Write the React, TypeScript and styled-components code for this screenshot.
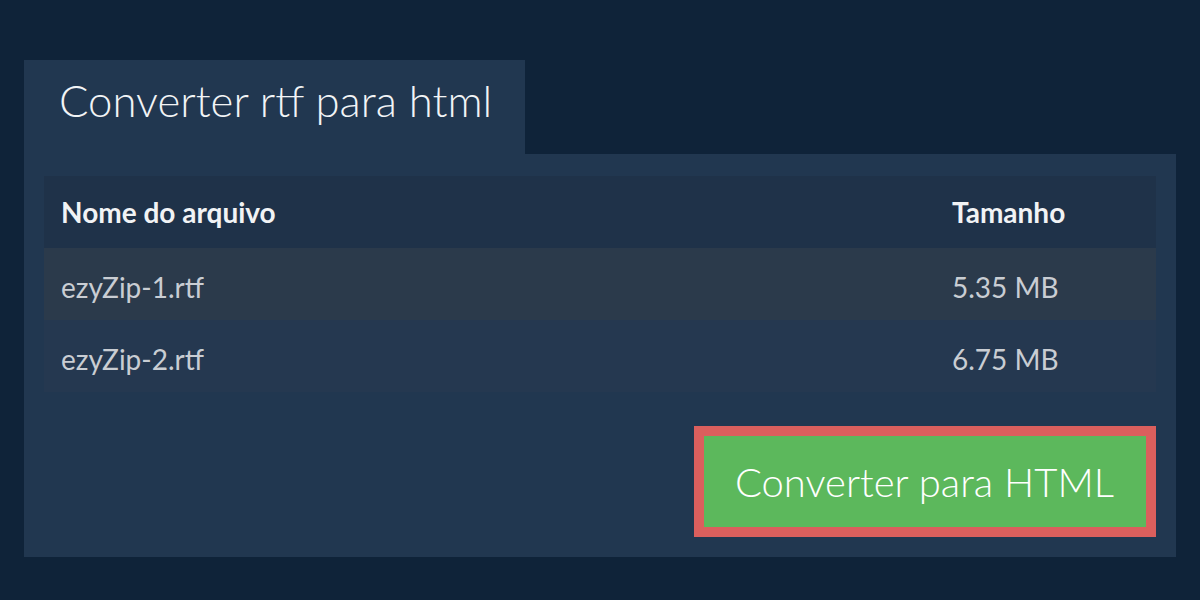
import React from "react";
import styled, { createGlobalStyle } from "styled-components";

const GlobalStyle = createGlobalStyle`
  html, body {
    margin: 0;
    padding: 0;
    background: #0f2339;
  }
  body {
    font-family: "Lato", "Liberation Sans", sans-serif;
  }
`;

const Page = styled.div`
  width: 1200px;
  height: 600px;
  box-sizing: border-box;
  padding: 60px 24px 0 24px;
  background: #0f2339;
`;

const Tab = styled.div`
  display: inline-block;
  box-sizing: border-box;
  height: 94px;
  padding: 0 33px 0 35px;
  background: #213750;
  color: #f2f4f6;
  font-size: 43.7px;
  font-weight: 300;
  line-height: 80px;
`;

const Panel = styled.div`
  display: flex;
  flex-direction: column;
  box-sizing: border-box;
  height: 403px;
  padding: 22px 20px 20px 20px;
  background: #213750;
`;

const Table = styled.div`
  display: flex;
  flex-direction: column;
`;

const Row = styled.div<{ bg: string }>`
  display: grid;
  grid-template-columns: 1fr 221px;
  height: 72px;
  align-items: center;
  background: ${(p) => p.bg};
`;

const Cell = styled.div<{ head?: boolean }>`
  padding: ${(p) => (p.head ? "0" : "6px")} 0 0 17px;
  font-size: 28px;
  font-weight: ${(p) => (p.head ? 700 : 400)};
  color: ${(p) => (p.head ? "#f1f3f5" : "#c9cdd3")};
`;

const Actions = styled.div`
  display: flex;
  justify-content: flex-end;
  margin-top: 34px;
`;

const ConvertButton = styled.button`
  box-sizing: border-box;
  height: 111px;
  padding: 0 32px 0 31px;
  border: 10px solid #db5f5d;
  background: #5cb85c;
  color: #ffffff;
  font-family: "Lato", "Liberation Sans", sans-serif;
  font-size: 40px;
  font-weight: 300;
  cursor: pointer;
`;

const files = [
  { name: "ezyZip-1.rtf", size: "5.35 MB", bg: "#2b3a4b" },
  { name: "ezyZip-2.rtf", size: "6.75 MB", bg: "#253850" },
];

export default function App() {
  return (
    <Page>
      <GlobalStyle />
      <Tab>Converter rtf para html</Tab>
      <Panel>
        <Table>
          <Row bg="#1f3249">
            <Cell head>Nome do arquivo</Cell>
            <Cell head>Tamanho</Cell>
          </Row>
          {files.map((f) => (
            <Row key={f.name} bg={f.bg}>
              <Cell>{f.name}</Cell>
              <Cell>{f.size}</Cell>
            </Row>
          ))}
        </Table>
        <Actions>
          <ConvertButton>Converter para HTML</ConvertButton>
        </Actions>
      </Panel>
    </Page>
  );
}
